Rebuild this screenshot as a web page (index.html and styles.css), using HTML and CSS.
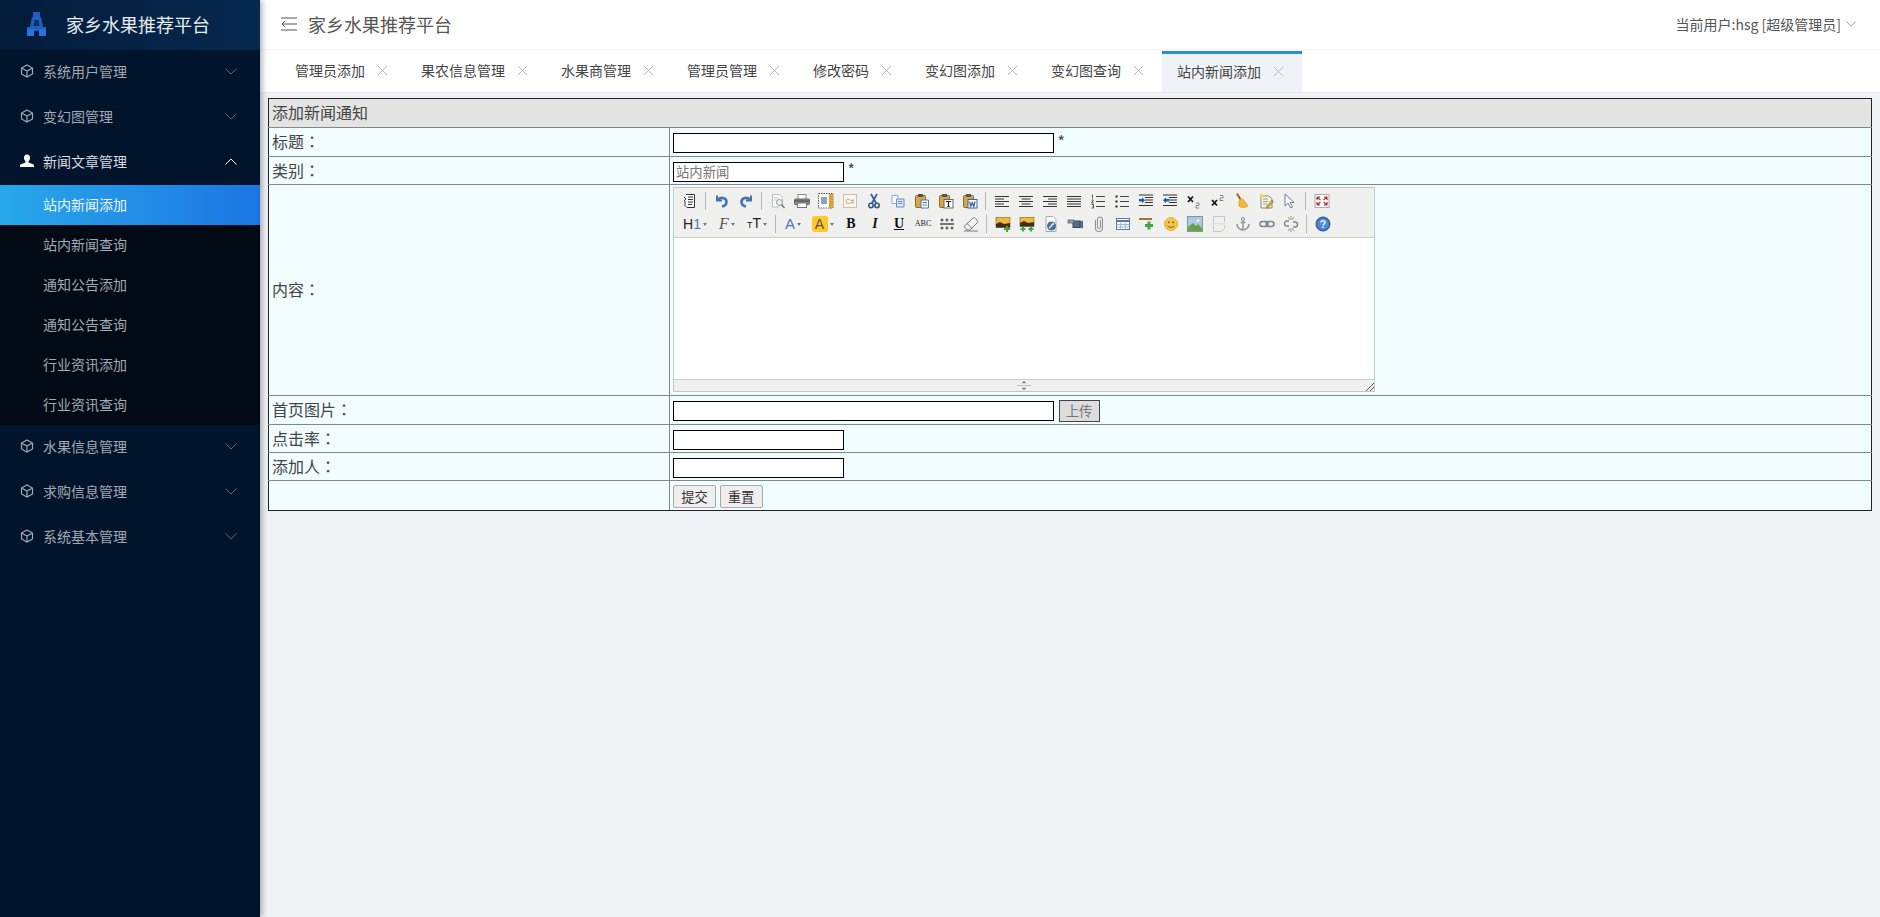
FILE: index.html
```html
<!DOCTYPE html>
<html lang="zh-CN">
<head>
  <meta charset="UTF-8" />
  <meta name="viewport" content="width=device-width, initial-scale=1.0" />
  <title>家乡水果推荐平台</title>
  <link rel="stylesheet" href="styles.css">
</head>
<body>
  <svg class="sprite" aria-hidden="true">
    <symbol id="cube" viewBox="0 0 14 14"><path d="M7 1l5.500 3v6L7 13l-5.500-3V4zM1.500 4L7 7l5.500-3M7 7v6" fill="none" stroke="currentColor" stroke-width="1.200"/></symbol>
    <symbol id="user" viewBox="0 0 14 14"><path d="M7 0.500c2 0 3 1.500 3 3.300 0 1.400-.6 2.700-1.500 3.400v1.300l4.500 1.700c.6.300 1 .8 1 1.500V13H0v-1.300c0-.7.400-1.200 1-1.500l4.500-1.700V7.200C4.600 6.500 4 5.200 4 3.800 4 2 5 .500 7 .500z" fill="currentColor"/></symbol>
    <symbol id="down" viewBox="0 0 12 7"><path d="M.5 .5L6 6l5.500-5.500" fill="none" stroke="currentColor"/></symbol>
    <symbol id="close" viewBox="0 0 11 11"><path d="M1 1l9 9M10 1l-9 9" fill="none" stroke="#b5b8bc"/></symbol>

    <symbol id="i-source" viewBox="0 0 16 16"><path d="M4 1.500h8.500v13H5l-2-2V8" fill="#fff" stroke="#333"/><path d="M6 4h5M6 6.500h5M6 9h5M6 11.500h4M2 4l2 2-2 2" fill="none" stroke="#333"/></symbol>
    <symbol id="i-undo" viewBox="0 0 16 16"><path d="M3 2.500v5h5" fill="none" stroke="#3f74bd" stroke-width="2"/><path d="M3.500 7c3-3.500 9-2.500 9 2 0 2.500-2 4-4.500 4.500" fill="none" stroke="#3f74bd" stroke-width="2.600"/></symbol>
    <symbol id="i-redo" viewBox="0 0 16 16"><path d="M13 2.500v5H8" fill="none" stroke="#3f74bd" stroke-width="2"/><path d="M12.500 7c-3-3.500-9-2.500-9 2 0 2.500 2 4 4.500 4.500" fill="none" stroke="#3f74bd" stroke-width="2.600"/></symbol>
    <symbol id="i-preview" viewBox="0 0 16 16"><path d="M2.500 1.500h7l3 3v4M2.500 1.500v12.500h7" fill="#fdfdfd" stroke="#b9bcc2"/><path d="M4.500 5h4M4.500 7h2" stroke="#c9ccd2"/><circle cx="9.500" cy="9.500" r="3" fill="#e8eef5" stroke="#8a95a3"/><path d="M11.500 11.500l3 3.500" stroke="#777" stroke-width="1.600"/></symbol>
    <symbol id="i-print" viewBox="0 0 16 16"><rect x="4" y="1.500" width="8" height="5" fill="#fff" stroke="#888"/><rect x=".5" y="6" width="15" height="5.500" rx="1" fill="#8d8d8d" stroke="#666"/><rect x="3.500" y="10" width="9" height="4.500" fill="#fff" stroke="#777"/><path d="M1 8h14" stroke="#444"/></symbol>
    <symbol id="i-template" viewBox="0 0 16 16"><rect x=".5" y=".5" width="14.500" height="14.500" fill="#fff" stroke="#556" stroke-dasharray="1.500 1"/><rect x="11" y="1" width="4" height="14" fill="#e0a030"/><rect x="3" y="4" width="6" height="7" fill="#8aa3c4"/></symbol>
    <symbol id="i-code" viewBox="0 0 16 16"><rect x="1.500" y="1.500" width="13" height="13" fill="#fbf8f2" stroke="#c9c0ad"/><text x="8" y="10.500" text-anchor="middle" font-family="Liberation Sans" font-size="7" fill="#c9853a">C#</text></symbol>
    <symbol id="i-cut" viewBox="0 0 16 16"><path d="M5 1l5 9M11 1l-5 9" stroke="#3d5f96" stroke-width="1.800"/><circle cx="5" cy="12.500" r="2.200" fill="none" stroke="#314f80" stroke-width="1.500"/><circle cx="11" cy="12.500" r="2.200" fill="none" stroke="#314f80" stroke-width="1.500"/></symbol>
    <symbol id="i-copy" viewBox="0 0 16 16"><path d="M2 2.500h6v8H2z" fill="#fff" stroke="#8ea6c8"/><path d="M6.500 6h7.500v8H6.500z" fill="#dfe9f7" stroke="#6a8cbc"/><path d="M8 8.500h4.500M8 10.500h4.500" stroke="#6a8cbc"/></symbol>
    <symbol id="i-paste" viewBox="0 0 16 16"><rect x="1.500" y="2.500" width="10" height="12" rx="1" fill="#d4a94a" stroke="#8c6a22"/><rect x="4" y="1" width="5" height="3" fill="#555"/><path d="M7 7h7.500v8H7z" fill="#fff" stroke="#5876a8"/><path d="M8.500 9.500h4.500M8.500 12h4.500" stroke="#5876a8"/></symbol>
    <symbol id="i-ptext" viewBox="0 0 16 16"><rect x="1.500" y="2.500" width="10" height="12" rx="1" fill="#d4a94a" stroke="#8c6a22"/><rect x="4" y="1" width="5" height="3" fill="#555"/><rect x="6" y="6.500" width="9" height="8.500" fill="#fff" stroke="#667"/><path d="M7.800 8.500h5.400M10.500 8.500v5M9.300 13.500h2.400" stroke="#222" stroke-width="1.200"/></symbol>
    <symbol id="i-pword" viewBox="0 0 16 16"><rect x="1.500" y="2.500" width="10" height="12" rx="1" fill="#d4a94a" stroke="#8c6a22"/><rect x="4" y="1" width="5" height="3" fill="#555"/><rect x="6" y="6.500" width="9" height="8.500" fill="#fff" stroke="#3e62a5"/><path d="M7.500 8.500l1.300 5 1.500-4 1.500 4 1.300-5" fill="none" stroke="#2d509a" stroke-width="1.100"/></symbol>

    <symbol id="i-left" viewBox="0 0 16 16"><path d="M1 3.500h14M1 6h9M1 8.500h14M1 11h9M1 13.500h14" stroke="#333"/></symbol>
    <symbol id="i-center" viewBox="0 0 16 16"><path d="M1 3.500h14M3.500 6h9M1 8.500h14M3.500 11h9M1 13.500h14" stroke="#333"/></symbol>
    <symbol id="i-right" viewBox="0 0 16 16"><path d="M1 3.500h14M6 6h9M1 8.500h14M6 11h9M1 13.500h14" stroke="#333"/></symbol>
    <symbol id="i-justify" viewBox="0 0 16 16"><path d="M1 3.500h14M1 6h14M1 8.500h14M1 11h14M1 13.500h14" stroke="#333"/></symbol>
    <symbol id="i-ol" viewBox="0 0 16 16"><path d="M6 3.500h9M6 8.500h9M6 13.500h9" stroke="#444"/><path d="M2.500 1.500v4M1.500 7h2l-2 3h2.200M1.500 11.500h2v1.500h-1M3.500 13v2h-2" fill="none" stroke="#334" stroke-width=".8"/></symbol>
    <symbol id="i-ul" viewBox="0 0 16 16"><path d="M6 3.500h9M6 8.500h9M6 13.500h9" stroke="#444"/><path d="M1.500 2.500h2v2h-2zM1.500 7.500h2v2h-2zM1.500 12.500h2v2h-2z" fill="#222"/></symbol>
    <symbol id="i-indent" viewBox="0 0 16 16"><path d="M7 4.500h8M7 7h8M7 9.500h8M1 12.500h14M1 2h14" stroke="#333"/><path d="M1 6h3V4.300L7 7.300l-3 3V8.500H1z" fill="#1d5e9e"/></symbol>
    <symbol id="i-outdent" viewBox="0 0 16 16"><path d="M7 4.500h8M7 7h8M7 9.500h8M1 12.500h14M1 2h14" stroke="#333"/><path d="M7 6H4V4.300L1 7.300l3 3V8.500h3z" fill="#1d5e9e"/></symbol>
    <symbol id="i-sub" viewBox="0 0 16 16"><path d="M2 3.500l5 5.500M7 3.500L2 9" stroke="#111" stroke-width="1.700"/><path d="M10 10h3v2.500h-3V15h3.200" fill="none" stroke="#667" stroke-width=".8"/></symbol>
    <symbol id="i-sup" viewBox="0 0 16 16"><path d="M2 7l5 5.500M7 7l-5 5.500" stroke="#111" stroke-width="1.700"/><path d="M10 2.500h3V5h-3v2.500h3.200" fill="none" stroke="#667" stroke-width=".8"/></symbol>
    <symbol id="i-clean" viewBox="0 0 16 16"><path d="M3 .5l3.500 6" stroke="#a8641d" stroke-width="2"/><path d="M5 8l3.500-2.500L14 13c-3 2-7 2-9 0z" fill="#f0b93a" stroke="#c9911f" stroke-width=".6"/></symbol>
    <symbol id="i-remove" viewBox="0 0 16 16"><path d="M3 3h8l3 3v9H3z" fill="#f6f4e6" stroke="#8a8a78"/><path d="M5 6h5M5 8.500h5M5 11h4" stroke="#9a9a88"/><circle cx="3.500" cy="2.500" r="2" fill="#f6d860"/><path d="M8 14l6-7 1.500 1.500-6 7z" fill="#d9a33b" stroke="#7a5a1c" stroke-width=".5"/></symbol>
    <symbol id="i-select" viewBox="0 0 16 16"><path d="M3 1v12l3-2.800L8.500 15l2-1-2.300-4.500h4z" fill="#f4f6f9" stroke="#74808f"/></symbol>
    <symbol id="i-full" viewBox="0 0 16 16"><rect x="1" y="1.500" width="14" height="13" fill="#fff" stroke="#b9a6a6"/><path d="M3 4l3.500 3M3 4h3M3 4v3M13 4L9.500 7M13 4h-3M13 4v3M3 12l3.500-3M3 12h3M3 12V9M13 12L9.500 9M13 12h-3M13 12V9" fill="none" stroke="#b32d2d" stroke-width="1.200"/></symbol>

    <symbol id="i-eraser" viewBox="0 0 16 16"><path d="M1 10.500L9.500 2.500c1-.9 2-.9 3 0l1.500 1.500c.9 1 .9 2 0 3L7 14H4z" fill="#f2f2f2" stroke="#778"/><path d="M4 7.500l5 5M1 15h14" fill="none" stroke="#778"/></symbol>
    <symbol id="i-hrdots" viewBox="0 0 16 16"><path d="M1 8h14" stroke="#222" stroke-width="1.200"/><path d="M3 2.500v3M1.500 4h3M8 2.500v3M6.500 4h3M13 2.500v3M11.500 4h3M3 10.500v3M1.500 12h3M8 10.500v3M6.500 12h3M13 10.500v3M11.500 12h3" stroke="#333"/></symbol>
    <symbol id="i-image" viewBox="0 0 16 16"><rect x="1" y="1.500" width="14" height="10" fill="#f2b63c" stroke="#7a6230" stroke-width=".6"/><path d="M1 11.500V8l4-2 4 2 6-1v4.500z" fill="#3c2f22"/><path d="M9 13h6M12 10v6" stroke="#47a544" stroke-width="2"/></symbol>
    <symbol id="i-images" viewBox="0 0 16 16"><rect x="1" y="1.500" width="14" height="9" fill="#f2b63c" stroke="#7a6230" stroke-width=".6"/><path d="M1 10.500V7l4-2 4 2 6-1v4.500z" fill="#3c2f22"/><path d="M1.500 13h5M4 10.500v5M9.500 13h5M12 10.500v5" stroke="#47a544" stroke-width="2"/></symbol>
    <symbol id="i-flash" viewBox="0 0 16 16"><path d="M3 .5h7l3 3v12H3z" fill="#fafafa" stroke="#a7adb4"/><circle cx="8.500" cy="10" r="4.500" fill="#4c6f9c"/><path d="M6 12c2 0 2-4 5-4.500" fill="none" stroke="#fff" stroke-width="1.300"/></symbol>
    <symbol id="i-video" viewBox="0 0 16 16"><rect x="6" y="5" width="7" height="6.500" fill="#55708c" stroke="#33475c"/><rect x="1" y="4" width="6" height="3" fill="#8fa2b5" stroke="#4b5663" stroke-width=".7"/><path d="M13 6l2.500-1v7L13 11z" fill="#55708c" stroke="#33475c" stroke-width=".7"/></symbol>
    <symbol id="i-attach" viewBox="0 0 16 16"><path d="M4.500 4v8a3.500 3.500 0 0 0 7 0V3.500a2.500 2.500 0 0 0-5 0V11a1.500 1.500 0 0 0 3 0V4" fill="none" stroke="#8e949b" stroke-width="1.100"/></symbol>
    <symbol id="i-table" viewBox="0 0 16 16"><rect x="1.500" y="2.500" width="13" height="11" fill="#fff" stroke="#557ba8"/><path d="M1.500 5h13" stroke="#557ba8" stroke-width="2"/><path d="M1.500 8.500h13M1.500 11h13M5.800 5.500v8M10.200 5.500v8" stroke="#9db5d1"/></symbol>
    <symbol id="i-hradd" viewBox="0 0 16 16"><path d="M0 3h13" stroke="#8d6b1f" stroke-width="1.800"/><path d="M10 5.500v8M6 9.500h8" stroke="#47a544" stroke-width="3"/></symbol>
    <symbol id="i-smile" viewBox="0 0 16 16"><circle cx="8" cy="8" r="6.500" fill="#f3c64b" stroke="#e0b23a"/><circle cx="5.800" cy="6.300" r=".9" fill="#6b4a10"/><circle cx="10.200" cy="6.300" r=".9" fill="#6b4a10"/><path d="M4.500 9.500c1.500 2.500 5.500 2.500 7 0" fill="none" stroke="#8a5c12"/></symbol>
    <symbol id="i-picture" viewBox="0 0 16 16"><rect x=".5" y=".5" width="15" height="15" fill="#a8cbe8" stroke="#7f97a8"/><path d="M1 15V11l5-4 3 3 2-2 4 4v3z" fill="#6ca14a"/><circle cx="11" cy="4.500" r="1.500" fill="#f5f2c6"/></symbol>
    <symbol id="i-pagebreak" viewBox="0 0 16 16"><path d="M2.500 6V.5h11V6M2.500 9.500v6h8l3-3V9.500" fill="none" stroke="#c2c6ca"/><path d="M1 7.800h14" stroke="#d0d3d7"/></symbol>
    <symbol id="i-anchor" viewBox="0 0 16 16"><circle cx="8" cy="3" r="1.500" fill="none" stroke="#8e98a2" stroke-width="1.200"/><path d="M8 4.500v9.500M5.500 6.500h5M2 8c0 3.500 3 6 6 6s6-2.500 6-6" fill="none" stroke="#8e98a2" stroke-width="1.500"/></symbol>
    <symbol id="i-link" viewBox="0 0 16 16"><rect x="1" y="5.500" width="8" height="5" rx="2.500" fill="none" stroke="#7a8694" stroke-width="1.500"/><rect x="7" y="5.500" width="8" height="5" rx="2.500" fill="none" stroke="#7a8694" stroke-width="1.500"/></symbol>
    <symbol id="i-unlink" viewBox="0 0 16 16"><path d="M6 5H4a2.500 2.500 0 0 0 0 5h2M10 6h2a2.500 2.500 0 0 1 0 5h-2" fill="none" stroke="#7a8694" stroke-width="1.400"/><path d="M5 1l2 3M11 1L9 4M8 0v3.500M5 15l2-3M11 15l-2-3M8 12.500V16" stroke="#999"/></symbol>
    <symbol id="i-help" viewBox="0 0 16 16"><circle cx="8" cy="8" r="7" fill="#3a73c4" stroke="#23508f"/><circle cx="8" cy="8" r="5.500" fill="#4f8ad6"/><path d="M6 6.500c0-2.500 4-2.500 4 0 0 1.500-2 1.500-2 3M8 10.500v1.500" fill="none" stroke="#fff" stroke-width="1.400"/></symbol>
  </svg>

  <div class="layout">
    <aside class="sidebar">
      <div class="brand">
        <svg class="brand-logo" viewBox="0 0 21 24">
          <path d="M7 0h7v5h1l2 10h3v9h-7v-5H8v5H1v-9h3L6 5h1z" fill="#1f5fc4"/>
          <path d="M1 17h7v7H1zM13 17h7v7h-7z" fill="#2a72dc"/>
          <path d="M8.500 8h4l1 6h-6z" fill="#0a2f58"/>
        </svg>
        <span>家乡水果推荐平台</span>
      </div>
      <nav>
        <a class="nav-item"><svg class="nav-icon"><use href="#cube"/></svg><span>系统用户管理</span><svg class="nav-arrow"><use href="#down"/></svg></a>
        <a class="nav-item"><svg class="nav-icon"><use href="#cube"/></svg><span>变幻图管理</span><svg class="nav-arrow"><use href="#down"/></svg></a>
        <a class="nav-item open"><svg class="nav-icon"><use href="#user"/></svg><span>新闻文章管理</span><svg class="nav-arrow"><use href="#down"/></svg></a>
        <div class="submenu">
          <a class="sub-item active">站内新闻添加</a>
          <a class="sub-item">站内新闻查询</a>
          <a class="sub-item">通知公告添加</a>
          <a class="sub-item">通知公告查询</a>
          <a class="sub-item">行业资讯添加</a>
          <a class="sub-item">行业资讯查询</a>
        </div>
        <a class="nav-item"><svg class="nav-icon"><use href="#cube"/></svg><span>水果信息管理</span><svg class="nav-arrow"><use href="#down"/></svg></a>
        <a class="nav-item"><svg class="nav-icon"><use href="#cube"/></svg><span>求购信息管理</span><svg class="nav-arrow"><use href="#down"/></svg></a>
        <a class="nav-item"><svg class="nav-icon"><use href="#cube"/></svg><span>系统基本管理</span><svg class="nav-arrow"><use href="#down"/></svg></a>
      </nav>
    </aside>

    <main class="main">
      <header class="topbar">
        <svg class="fold" viewBox="0 0 16 14"><path d="M0 1h16M0 13h16M1 7h15M4 4L1 7l3 3" fill="none" stroke="#555"/></svg>
        <h1>家乡水果推荐平台</h1>
        <div class="current-user">当前用户:hsg [超级管理员]<svg class="user-arrow"><use href="#down"/></svg></div>
      </header>

      <div class="tabs">
        <a class="tab">管理员添加<svg class="tab-close"><use href="#close"/></svg></a>
        <a class="tab">果农信息管理<svg class="tab-close"><use href="#close"/></svg></a>
        <a class="tab">水果商管理<svg class="tab-close"><use href="#close"/></svg></a>
        <a class="tab">管理员管理<svg class="tab-close"><use href="#close"/></svg></a>
        <a class="tab">修改密码<svg class="tab-close"><use href="#close"/></svg></a>
        <a class="tab">变幻图添加<svg class="tab-close"><use href="#close"/></svg></a>
        <a class="tab">变幻图查询<svg class="tab-close"><use href="#close"/></svg></a>
        <a class="tab current">站内新闻添加<svg class="tab-close"><use href="#close"/></svg></a>
      </div>

      <div class="content">
        <table class="form-table">
          <colgroup><col class="label-col"><col></colgroup>
          <tr class="row-head"><td colspan="2">添加新闻通知</td></tr>
          <tr class="row-a">
            <td>标题<span class="colon" lang="zh-Hant">：</span></td>
            <td><input class="input-long" type="text"> *</td>
          </tr>
          <tr class="row-b">
            <td>类别<span class="colon" lang="zh-Hant">：</span></td>
            <td><input class="input-short" type="text" value="站内新闻" readonly> *</td>
          </tr>
          <tr class="row-editor">
            <td>内容<span class="colon" lang="zh-Hant">：</span></td>
            <td>
              <div class="editor">
                <div class="toolbar">
                  <div class="tool-row">
                    <span class="tb"><svg><use href="#i-source"/></svg></span><i class="sep"></i>
                    <span class="tb"><svg><use href="#i-undo"/></svg></span>
                    <span class="tb"><svg><use href="#i-redo"/></svg></span><i class="sep"></i>
                    <span class="tb"><svg><use href="#i-preview"/></svg></span>
                    <span class="tb"><svg><use href="#i-print"/></svg></span>
                    <span class="tb"><svg><use href="#i-template"/></svg></span>
                    <span class="tb"><svg><use href="#i-code"/></svg></span>
                    <span class="tb"><svg><use href="#i-cut"/></svg></span>
                    <span class="tb"><svg><use href="#i-copy"/></svg></span>
                    <span class="tb"><svg><use href="#i-paste"/></svg></span>
                    <span class="tb"><svg><use href="#i-ptext"/></svg></span>
                    <span class="tb"><svg><use href="#i-pword"/></svg></span><i class="sep"></i>
                    <span class="tb"><svg><use href="#i-left"/></svg></span>
                    <span class="tb"><svg><use href="#i-center"/></svg></span>
                    <span class="tb"><svg><use href="#i-right"/></svg></span>
                    <span class="tb"><svg><use href="#i-justify"/></svg></span>
                    <span class="tb"><svg><use href="#i-ol"/></svg></span>
                    <span class="tb"><svg><use href="#i-ul"/></svg></span>
                    <span class="tb"><svg><use href="#i-indent"/></svg></span>
                    <span class="tb"><svg><use href="#i-outdent"/></svg></span>
                    <span class="tb"><svg><use href="#i-sub"/></svg></span>
                    <span class="tb"><svg><use href="#i-sup"/></svg></span>
                    <span class="tb"><svg><use href="#i-clean"/></svg></span>
                    <span class="tb"><svg><use href="#i-remove"/></svg></span>
                    <span class="tb"><svg><use href="#i-select"/></svg></span><i class="sep"></i>
                    <span class="tb"><svg><use href="#i-full"/></svg></span>
                  </div>
                  <div class="tool-row">
                    <span class="tb drop w-34"><b class="t-h1">H<em>1</em></b><u class="caret"></u></span>
                    <span class="tb drop w-30"><b class="t-font">F</b><u class="caret"></u></span>
                    <span class="tb drop w-30"><b class="t-size"><small>T</small>T</b><u class="caret"></u></span><i class="sep"></i>
                    <span class="tb drop w-26"><b class="t-color">A</b><u class="caret"></u></span>
                    <span class="tb drop w-33"><b class="t-mark">A</b><u class="caret"></u></span>
                    <span class="tb"><b class="t-bold">B</b></span>
                    <span class="tb"><b class="t-italic">I</b></span>
                    <span class="tb"><b class="t-under">U</b></span>
                    <span class="tb"><b class="t-strike">ABC</b></span>
                    <span class="tb"><svg><use href="#i-hrdots"/></svg></span>
                    <span class="tb"><svg><use href="#i-eraser"/></svg></span><i class="sep"></i>
                    <span class="tb"><svg><use href="#i-image"/></svg></span>
                    <span class="tb"><svg><use href="#i-images"/></svg></span>
                    <span class="tb"><svg><use href="#i-flash"/></svg></span>
                    <span class="tb"><svg><use href="#i-video"/></svg></span>
                    <span class="tb"><svg><use href="#i-attach"/></svg></span>
                    <span class="tb"><svg><use href="#i-table"/></svg></span>
                    <span class="tb"><svg><use href="#i-hradd"/></svg></span>
                    <span class="tb"><svg><use href="#i-smile"/></svg></span>
                    <span class="tb"><svg><use href="#i-picture"/></svg></span>
                    <span class="tb"><svg><use href="#i-pagebreak"/></svg></span>
                    <span class="tb"><svg><use href="#i-anchor"/></svg></span>
                    <span class="tb"><svg><use href="#i-link"/></svg></span>
                    <span class="tb"><svg><use href="#i-unlink"/></svg></span><i class="sep"></i>
                    <span class="tb"><svg><use href="#i-help"/></svg></span>
                  </div>
                </div>
                <div class="edit-area"></div>
                <div class="statusbar">
                  <svg class="move" viewBox="0 0 14 9"><path d="M0 4.500h14M7 0l-2 2h4zM7 9l-2-2h4z" fill="#777" stroke="#999" stroke-width=".5"/></svg>
                  <svg class="grip" viewBox="0 0 8 8"><path d="M0 8l8-8M4 8l4-4" stroke="#555"/></svg>
                </div>
              </div>
            </td>
          </tr>
          <tr class="row-a">
            <td>首页图片<span class="colon" lang="zh-Hant">：</span></td>
            <td><input class="input-long" type="text"> <button class="upload-btn" disabled>上传</button></td>
          </tr>
          <tr class="row-b">
            <td>点击率<span class="colon" lang="zh-Hant">：</span></td>
            <td><input class="input-short" type="text"></td>
          </tr>
          <tr class="row-b">
            <td>添加人<span class="colon" lang="zh-Hant">：</span></td>
            <td><input class="input-short" type="text"></td>
          </tr>
          <tr class="row-foot">
            <td></td>
            <td><button class="form-btn">提交</button> <button class="form-btn">重置</button></td>
          </tr>
        </table>
      </div>
    </main>
  </div>
</body>
</html>
```

FILE: styles.css
```css
html, body {
  margin: 0;
  padding: 0;
  height: 100%;
  overflow: hidden;
  font-family: "Noto Sans CJK SC", "Liberation Sans", sans-serif;
  background: #f0f2f5;
}

.sprite {
  display: none;
}

.layout {
  display: flex;
  height: 100vh;
}

/* sidebar */
.sidebar {
  width: 260px;
  flex-shrink: 0;
  background: #01142c;
  box-shadow: 2px 0 6px rgba(0, 21, 41, 0.35);
  position: relative;
  z-index: 2;
}

.brand {
  display: flex;
  align-items: center;
  height: 50px;
  padding: 0 0 2px 26px;
  box-sizing: border-box;
  background: linear-gradient(90deg, #021c3a, #07284f);
  color: #e8edf2;
  font-size: 18px;
}

.brand-logo {
  width: 21px;
  height: 24px;
  margin-right: 19px;
}

.nav-item {
  display: flex;
  align-items: center;
  height: 45px;
  padding: 0 0 3px 20px;
  box-sizing: border-box;
  color: #a3a9b2;
  font-size: 14px;
}

.nav-item span {
  flex: 1;
}

.nav-icon {
  width: 14px;
  height: 14px;
  margin-right: 9px;
}

.nav-arrow {
  width: 12px;
  height: 7px;
  margin-right: 23px;
  color: #5d6878;
}

.nav-item.open {
  color: #d8dce0;
}

.nav-item.open .nav-icon {
  color: #fff;
}

.nav-item.open .nav-arrow {
  color: #fff;
  transform: rotate(180deg);
}

.submenu {
  background: #010a15;
}

.sub-item {
  display: flex;
  align-items: center;
  height: 40px;
  padding: 0 0 2px 43px;
  box-sizing: border-box;
  color: #a3a9b2;
  font-size: 14px;
}

.sub-item.active {
  background: linear-gradient(90deg, #28a8ea, #1c76e2);
  color: #eef6fc;
}

/* top area */
.main {
  flex: 1;
  min-width: 0;
  display: flex;
  flex-direction: column;
}

.topbar {
  display: flex;
  align-items: center;
  height: 50px;
  padding: 0 0 2px 21px;
  background: #fff;
  border-bottom: 1px solid #f4f5f6;
  box-sizing: border-box;
}

.fold {
  width: 16px;
  height: 14px;
  margin-right: 11px;
}

.topbar h1 {
  flex: 1;
  margin: 0;
  font-size: 18px;
  font-weight: 400;
  color: #555;
}

.current-user {
  display: flex;
  align-items: center;
  font-size: 14px;
  color: #555;
  margin-right: 24px;
}

.user-arrow {
  width: 10px;
  height: 6px;
  margin-left: 5px;
  color: #888;
}

.tabs {
  display: flex;
  height: 42px;
  padding-left: 20px;
  background: #fff;
  border-bottom: 1px solid #e6e8eb;
}

.tab {
  display: flex;
  align-items: center;
  padding: 0 18px 2px 15px;
  font-size: 14px;
  color: #444;
}

.tab.current {
  background: #eff3f8;
  margin-top: 1px;
  border-top: 3px solid #2a8fd0;
  padding-bottom: 4px;
}

.tab-close {
  width: 11px;
  height: 11px;
  margin-left: 12px;
}

/* form */
.content {
  padding: 5px 8px 0;
}

.form-table {
  width: 100%;
  table-layout: fixed;
  border-collapse: collapse;
  background: #f1fdff;
  font-size: 16px;
  color: #444;
}

.label-col {
  width: 401px;
}

.form-table td {
  padding: 0 3px 2px;
  border: 1px solid #7b8a8c;
}

/* outer frame is darker than the inner grid */
.form-table td:first-child {
  border-left-color: #222;
}

.form-table td:last-child {
  border-right-color: #222;
}

.row-head td {
  height: 26px;
  background: #e4e4e4;
  border-top-color: #222;
}

.row-foot td {
  height: 27px;
  border-bottom-color: #222;
}

.colon {
  font-family: "Noto Sans CJK TC", sans-serif;
}

.row-a td {
  height: 26px;
}

.row-b td {
  height: 25px;
}

.row-editor td {
  height: 208px;
}

.form-table input {
  height: 20px;
  padding: 1px 2px;
  box-sizing: border-box;
  border: 1px solid #000;
  border-radius: 0;
  background: #fff;
  font-family: inherit;
  font-size: 13.330px;
  vertical-align: middle;
}

.input-long {
  width: 381px;
}

.input-short {
  width: 171px;
}

.input-short[readonly] {
  color: #757575;
}

.upload-btn {
  width: 41px;
  height: 22px;
  padding: 0;
  margin-left: 1px;
  border: 1px solid #444;
  background: #ddd;
  color: #777;
  font-family: inherit;
  font-size: 13.330px;
  vertical-align: middle;
}

.form-btn {
  width: 43px;
  height: 23px;
  padding: 0;
  border: 1px solid #a8a8a8;
  border-radius: 2px;
  background: #efefef;
  color: #333;
  font-family: inherit;
  font-size: 13.330px;
  vertical-align: middle;
}

/* editor */
.editor {
  width: 702px;
  height: 205px;
  border: 1px solid #c5c5c5;
  box-sizing: border-box;
  display: flex;
  flex-direction: column;
  background: #f0f0ee;
}

.toolbar {
  height: 50px;
  padding: 2px 0 0 4px;
  box-sizing: border-box;
  border-bottom: 1px solid #ccc;
}

.tool-row {
  display: flex;
  align-items: center;
  height: 23px;
}

.tb {
  display: flex;
  align-items: center;
  justify-content: center;
  width: 24px;
  height: 23px;
  flex-shrink: 0;
}

.tb svg {
  width: 16px;
  height: 16px;
}

.tb b {
  display: block;
  line-height: 16px;
  font-weight: 400;
}

.sep {
  width: 1px;
  height: 18px;
  margin: 0 4px 0 3px;
  background: #b5b5b5;
  flex-shrink: 0;
}

.drop {
  gap: 2px;
}

.w-26 { width: 26px; }
.w-30 { width: 30px; }
.w-33 { width: 33px; }
.w-34 { width: 34px; }

.caret {
  width: 0;
  height: 0;
  border: 2px solid transparent;
  border-top: 3px solid #777;
  border-bottom: 0;
}

.t-h1 {
  font-family: "Liberation Sans", sans-serif;
  font-size: 14px;
  color: #222;
}

.t-h1 em {
  font-style: normal;
  color: #3f74bd;
}

.t-font {
  font-family: "Liberation Serif", serif;
  font-size: 16px;
  font-style: italic;
  color: #555;
}

.t-size {
  font-family: "Liberation Sans", sans-serif;
  font-size: 14px;
  color: #222;
}

.t-size small {
  font-size: 9px;
}

.t-color {
  font-family: "Liberation Sans", sans-serif;
  font-size: 15px;
  color: #3f7cc8;
}

.t-mark {
  width: 16px;
  text-align: center;
  border-radius: 2px;
  background: #ffc928;
  font-family: "Liberation Sans", sans-serif;
  font-size: 14px;
  color: #555;
}

.t-bold,
.t-italic,
.t-under {
  font-family: "Liberation Serif", serif;
  font-size: 14px;
  color: #111;
}

.tb .t-bold,
.tb .t-italic,
.tb .t-under {
  font-weight: 700;
}

.t-italic {
  font-style: italic;
}

.t-under {
  text-decoration: underline;
}

.t-strike {
  font-family: "Liberation Serif", serif;
  font-size: 8px;
  color: #222;
}

.edit-area {
  height: 141px;
  background: #fff;
  border-bottom: 1px solid #ccc;
}

.statusbar {
  flex: 1;
  position: relative;
  display: flex;
  align-items: center;
  justify-content: center;
}

.move {
  width: 14px;
  height: 9px;
}

.grip {
  position: absolute;
  right: 0;
  bottom: 0;
  width: 8px;
  height: 8px;
}
```
